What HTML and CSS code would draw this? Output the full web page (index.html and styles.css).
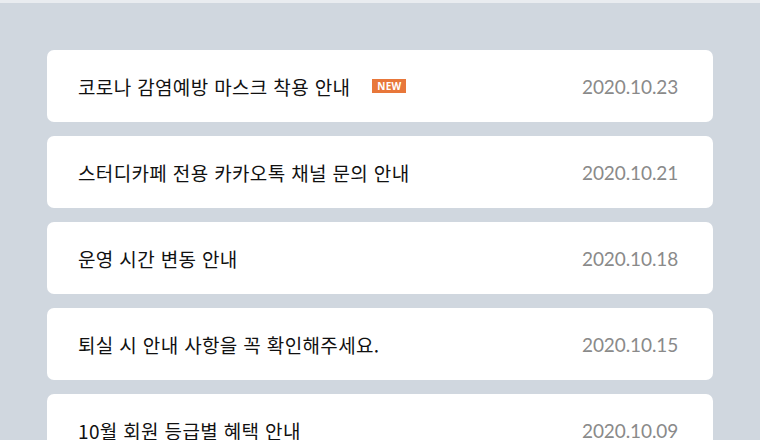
FILE: index.html
```html
<!DOCTYPE html>
<html lang="ko">
<head>
    <meta charset="UTF-8">
    <meta name="viewport" content="width=device-width, initial-scale=1.0">
    <title>공지사항</title>
    <link rel="stylesheet" href="styles.css">
</head>
<body>
    <div class="top-line"></div>
    <ul class="notice-list">
        <li class="notice">
            <span class="title">코로나 감염예방 마스크 착용 안내</span>
            <span class="badge-new">NEW</span>
            <span class="date">2020.10.23</span>
        </li>
        <li class="notice">
            <span class="title">스터디카페 전용 카카오톡 채널 문의 안내</span>
            <span class="date">2020.10.21</span>
        </li>
        <li class="notice">
            <span class="title">운영 시간 변동 안내</span>
            <span class="date">2020.10.18</span>
        </li>
        <li class="notice">
            <span class="title">퇴실 시 안내 사항을 꼭 확인해주세요.</span>
            <span class="date">2020.10.15</span>
        </li>
        <li class="notice">
            <span class="title">10월 회원 등급별 혜택 안내</span>
            <span class="date">2020.10.09</span>
        </li>
    </ul>
</body>
</html>
```

FILE: styles.css
```css
body {
    margin: 0;
    background-color: #d0d7df;
    font-family: "Noto Sans CJK KR", "Noto Sans", sans-serif;
}
.top-line {
    height: 3px;
    background-color: #e9ecf0;
}
.notice-list {
    list-style: none;
    margin: 0;
    padding: 47px 47px 0;
    display: flex;
    flex-direction: column;
    gap: 14px;
}
.notice {
    display: flex;
    align-items: center;
    height: 72px;
    padding: 0 31px;
    background: white;
    border-radius: 7px;
}
.title {
    font-size: 19px;
    letter-spacing: 0.35px;
    color: #111;
}
.badge-new {
    margin-left: 22px;
    padding: 0 5px;
    height: 14px;
    line-height: 14px;
    background-color: #e8773a;
    color: white;
    font-family: "Open Sans", Arial, sans-serif;
    font-size: 10px;
    font-weight: bold;
    letter-spacing: 0.2px;
}
.date {
    margin-left: auto;
    width: 100px;
    font-family: Lato, sans-serif;
    font-size: 19px;
    letter-spacing: -0.1px;
    color: #8a8a8a;
}
```
